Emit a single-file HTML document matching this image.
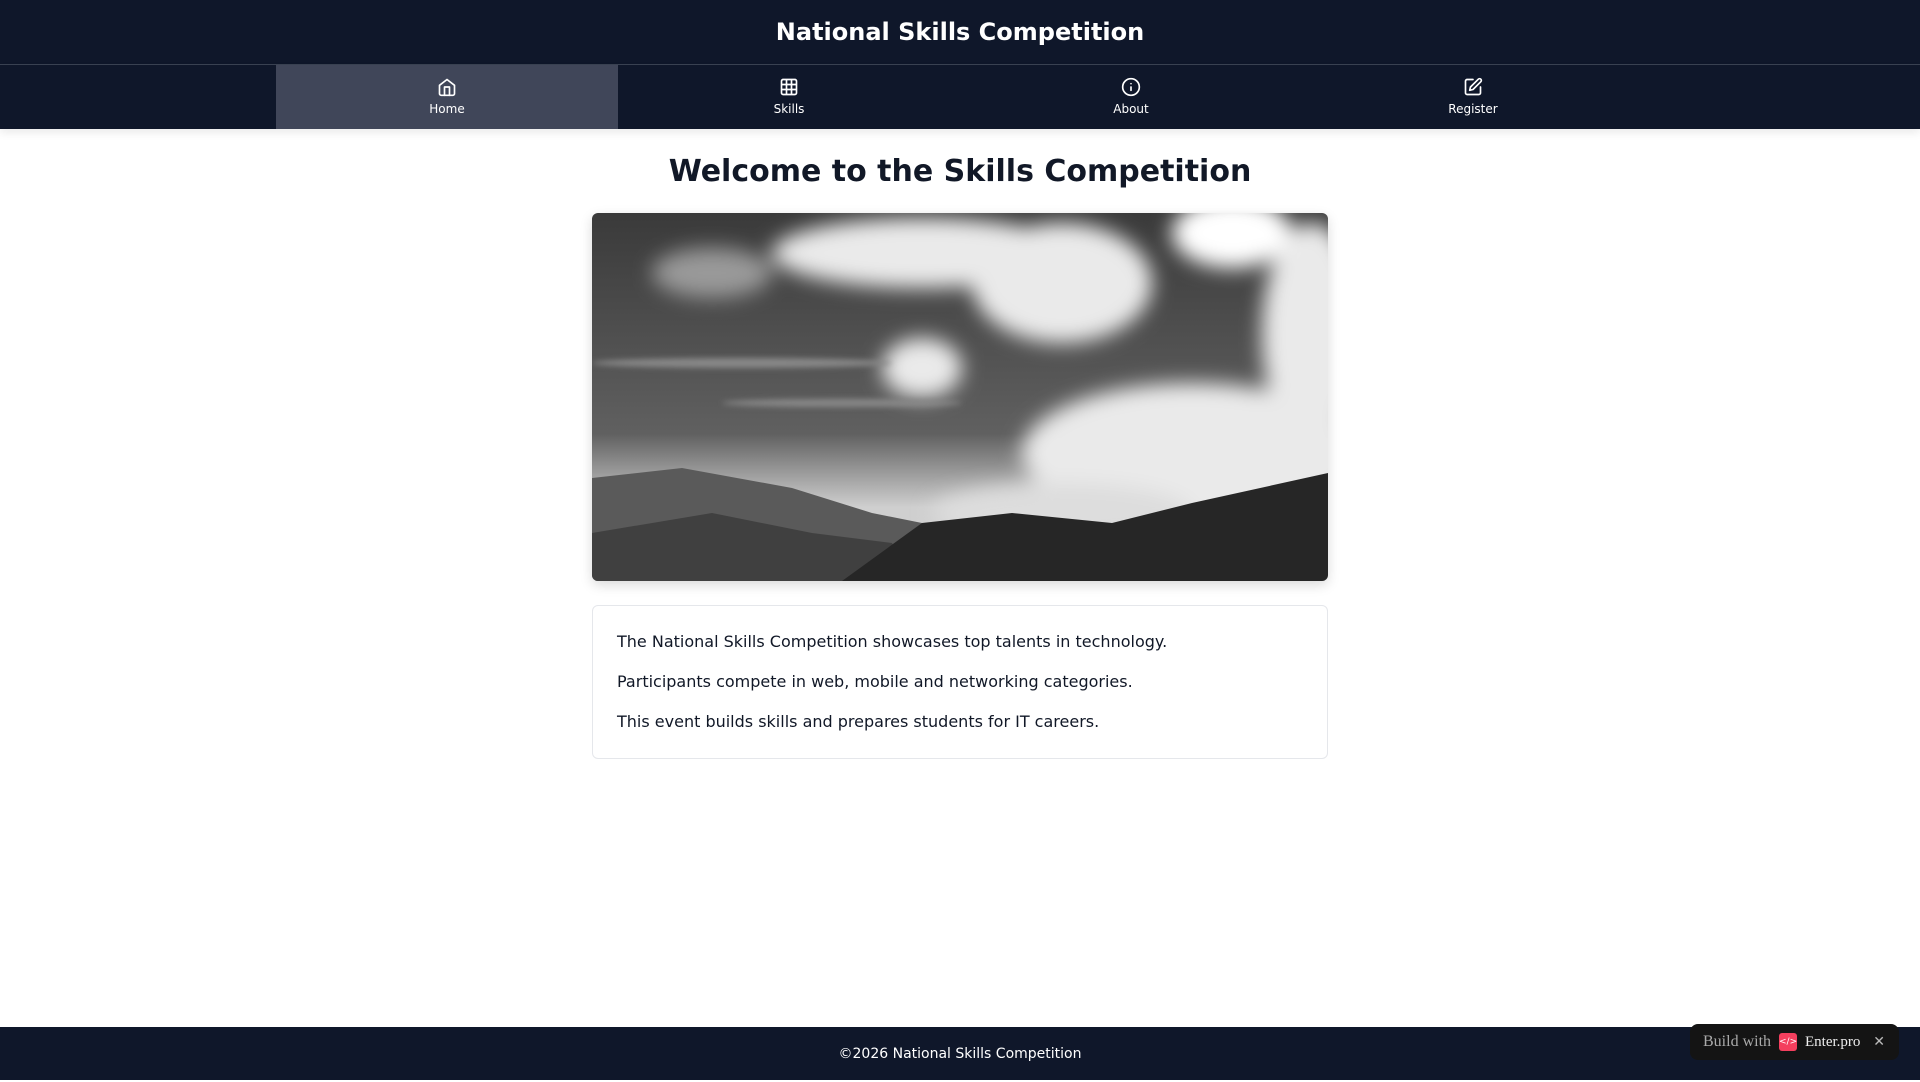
<!DOCTYPE html>
<html><head><meta charset="utf-8"><style>
*{box-sizing:border-box;margin:0;padding:0}
body{width:1920px;height:1080px;background:#fff;font-family:"DejaVu Sans","Liberation Sans",sans-serif;position:relative;overflow:hidden}
.hdr{height:65px;background:#0f172a;border-bottom:1px solid #3a4252;color:#fff;text-align:center;font-weight:bold;font-size:24px;line-height:64px}
.nav{height:64px;background:#0f172a;display:flex;justify-content:center;box-shadow:0 4px 8px rgba(0,0,0,.08)}
.tab{width:342px;color:#fff;display:flex;flex-direction:column;align-items:center;padding-top:12px;font-size:12px}
.tab.on{background:#404659}
.tab svg{width:20px;height:20px;margin-bottom:5px}
h1{text-align:center;font-size:30px;color:#111827;margin-top:21px;height:56px;line-height:44px}
.img{position:absolute;left:592px;top:213px;width:736px;height:368px;border-radius:6px;overflow:hidden;box-shadow:0 4px 12px rgba(0,0,0,.15)}
.card{position:absolute;left:592px;top:605px;width:736px;height:154px;border:1px solid #e5e7eb;border-radius:6px;padding:26px 24px;font-size:16px;color:#111827}
.card p{line-height:20px;margin-bottom:20px}
.ftr{position:absolute;left:0;top:1027px;width:1920px;height:53px;background:#0f172a;color:#fff;font-size:14px;text-align:center;line-height:55px}
.badge{position:absolute;left:1690px;top:1024px;width:209px;height:36px;background:#141414;border-radius:8px;font-family:"Liberation Serif",serif;font-size:16px;color:#aaa;display:flex;align-items:center;padding-left:13px}
.lg{width:18px;height:18px;background:#f43f5e;border-radius:3px;margin:0 8px;color:#fff;font-size:9px;text-align:center;line-height:18px;font-family:"DejaVu Sans",sans-serif}
</style></head><body>
<div class="hdr">National Skills Competition</div>
<div class="nav">
<div class="tab on"><svg viewBox="0 0 24 24" fill="none" stroke="#fff" stroke-width="2" stroke-linecap="round" stroke-linejoin="round"><path d="M3 10l9-7 9 7v10a2 2 0 0 1-2 2H5a2 2 0 0 1-2-2z"/><path d="M9 22V12h6v10"/></svg>Home</div>
<div class="tab"><svg viewBox="0 0 24 24" fill="none" stroke="#fff" stroke-width="2"><rect x="3" y="3" width="18" height="18" rx="2"/><path d="M3 9h18M3 15h18M9 3v18M15 3v18"/></svg>Skills</div>
<div class="tab"><svg viewBox="0 0 24 24" fill="none" stroke="#fff" stroke-width="2" stroke-linecap="round"><circle cx="12" cy="12" r="10"/><path d="M12 16v-4M12 8h.01"/></svg>About</div>
<div class="tab"><svg viewBox="0 0 24 24" fill="none" stroke="#fff" stroke-width="2" stroke-linecap="round" stroke-linejoin="round"><path d="M12 3H5a2 2 0 0 0-2 2v14a2 2 0 0 0 2 2h14a2 2 0 0 0 2-2v-7"/><path d="M18.4 2.6a2.1 2.1 0 0 1 3 3L12 15l-4 1 1-4z"/></svg>Register</div>
</div>
<h1>Welcome to the Skills Competition</h1>
<div class="img"><svg width="736" height="368" viewBox="0 0 736 368">
<defs><linearGradient id="s" x1="0" y1="0" x2="0" y2="1"><stop offset="0" stop-color="#3a3a3a"/><stop offset=".6" stop-color="#606060"/><stop offset=".8" stop-color="#cfcfcf"/></linearGradient>
<filter id="b"><feGaussianBlur stdDeviation="10"/></filter><filter id="b2"><feGaussianBlur stdDeviation="3"/></filter></defs>
<rect width="736" height="368" fill="url(#s)"/>
<g filter="url(#b)" fill="#eaeaea">
<ellipse cx="330" cy="40" rx="150" ry="35"/><ellipse cx="470" cy="70" rx="90" ry="60"/>
<ellipse cx="640" cy="20" rx="60" ry="35" fill="#fff"/><ellipse cx="720" cy="120" rx="50" ry="110"/>
<ellipse cx="600" cy="240" rx="170" ry="70"/><ellipse cx="330" cy="155" rx="40" ry="30"/>
<ellipse cx="470" cy="300" rx="130" ry="30" fill="#ddd"/><ellipse cx="120" cy="60" rx="60" ry="25" fill="#999"/>
</g>
<g filter="url(#b2)" fill="#888"><ellipse cx="150" cy="150" rx="150" ry="5"/><ellipse cx="250" cy="190" rx="120" ry="4"/></g>
<path d="M0 265L90 255L200 275L280 300L330 310L330 368L0 368Z" fill="#5a5a5a"/>
<path d="M0 320L120 300L220 320L300 330L320 368L0 368Z" fill="#404040"/>
<path d="M250 368L330 310L420 300L520 310L600 290L736 260L736 368Z" fill="#262626"/>
</svg></div>
<div class="card"><p>The National Skills Competition showcases top talents in technology.</p><p>Participants compete in web, mobile and networking categories.</p><p>This event builds skills and prepares students for IT careers.</p></div>
<div class="ftr">©2026 National Skills Competition</div>
<div class="badge">Build with<span class="lg">&lt;/&gt;</span><span style="color:#eee;font-size:15px">Enter.pro</span><span style="margin-left:auto;margin-right:14px;color:#bbb;font-family:'DejaVu Sans';font-size:14px">✕</span></div>
</body></html>
